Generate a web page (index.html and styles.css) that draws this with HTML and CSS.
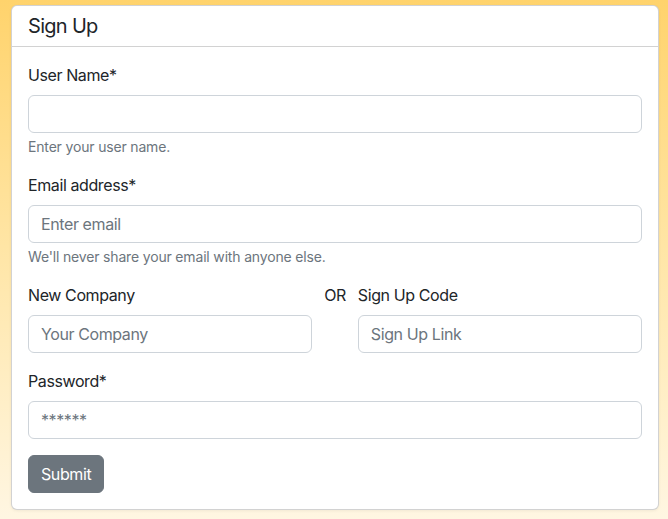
FILE: index.html
```html
<!DOCTYPE html>
<html lang="en">
<head>
<meta charset="utf-8">
<title>Sign Up</title>
<link rel="stylesheet" href="styles.css">
</head>
<body>
<div class="card">
  <div class="card-header">Sign Up</div>
  <form class="card-body">
    <div class="group">
      <label class="label">User Name*</label>
      <input class="control" type="text">
      <div class="help">Enter your user name.</div>
    </div>
    <div class="group">
      <label class="label">Email address*</label>
      <input class="control" type="email" placeholder="Enter email">
      <div class="help">We'll never share your email with anyone else.</div>
    </div>
    <div class="group split">
      <div class="col">
        <label class="label">New Company</label>
        <input class="control" type="text" placeholder="Your Company">
      </div>
      <div class="or">OR</div>
      <div class="col">
        <label class="label">Sign Up Code</label>
        <input class="control" type="text" placeholder="Sign Up Link">
      </div>
    </div>
    <div class="group">
      <label class="label">Password*</label>
      <input class="control" type="password" placeholder="******">
    </div>
    <button class="btn" type="button">Submit</button>
  </form>
</div>
</body>
</html>
```
FILE: styles.css
```css
html, body {
  height: 100%;
}
body {
  margin: 0;
  padding: 5px 9px 0 11px;
  box-sizing: border-box;
  font-family: Inter, "Liberation Sans", sans-serif;
  letter-spacing: -0.025em;
  color: #212529;
  background: linear-gradient(to bottom, #ffd36c 0%, #ffe6a8 50%, #fff6e2 100%);
}
.card {
  background: #fff;
  border: 1px solid rgba(0, 0, 0, 0.175);
  border-radius: 6px;
  box-shadow: 0 1px 3px rgba(0, 0, 0, 0.06);
}
.card-header {
  padding: 8px 16px;
  font-size: 20px;
  line-height: 24px;
  font-weight: 400;
  letter-spacing: -0.035em;
  border-bottom: 1px solid rgba(0, 0, 0, 0.175);
}
.card-body {
  padding: 16px;
  display: flex;
  flex-direction: column;
  align-items: flex-start;
}
.group {
  display: flex;
  flex-direction: column;
  align-self: stretch;
  margin-bottom: 16px;
}
.label {
  font-size: 16px;
  line-height: 24px;
  margin-bottom: 8px;
}
.control {
  box-sizing: border-box;
  height: 38px;
  width: 100%;
  padding: 6px 12px;
  font-family: inherit;
  font-size: 16px;
  line-height: 24px;
  letter-spacing: inherit;
  color: #212529;
  background: #fff;
  border: 1px solid #ced4da;
  border-radius: 6px;
  outline: none;
}
.control::placeholder {
  color: #6c757d;
  opacity: 1;
}
.help {
  margin-top: 4px;
  font-size: 14px;
  line-height: 20px;
  letter-spacing: -0.012em;
  color: #6c757d;
}
.split {
  display: grid;
  grid-template-columns: 1fr auto 1fr;
  column-gap: 12px;
}
.col {
  display: flex;
  flex-direction: column;
}
.or {
  font-size: 16px;
  line-height: 24px;
}
.btn {
  font-family: inherit;
  font-size: 16px;
  line-height: 24px;
  letter-spacing: inherit;
  padding: 6px 12px;
  color: #fff;
  background: #6c757d;
  border: 1px solid #6c757d;
  border-radius: 6px;
}
```
